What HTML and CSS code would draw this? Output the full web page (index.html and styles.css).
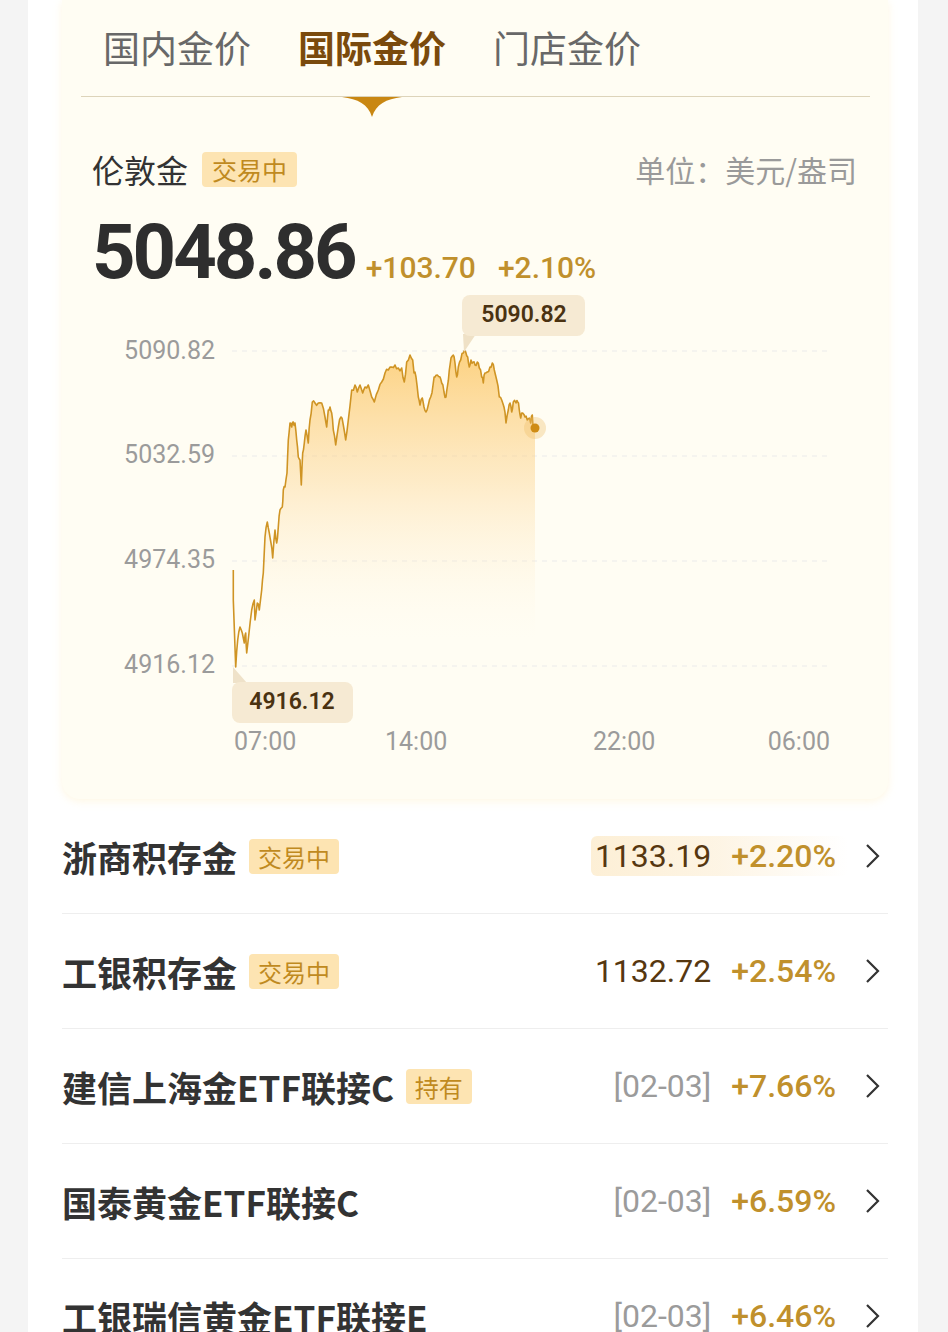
FILE: index.html
```html
<!DOCTYPE html>
<html lang="zh-CN">
<head>
    <meta charset="UTF-8">
    <meta name="viewport" content="width=device-width, initial-scale=1.0">
    <title>国际金价</title>
    <link rel="stylesheet" href="styles.css">
</head>
<body>
    <div class="panel">
        <section class="quote-card">
            <nav class="tabs">
                <span class="tab">国内金价</span>
                <span class="tab active">国际金价
                    <svg class="tab-arrow" width="60" height="20" viewBox="0 0 60 20">
                        <path d="M0 0 H60 C44 2 34 7 30 20 C26 7 16 2 0 0 Z" fill="#c98712"/>
                    </svg>
                </span>
                <span class="tab">门店金价</span>
            </nav>

            <div class="quote-head">
                <div class="quote-name">伦敦金 <span class="badge">交易中</span></div>
                <div class="unit">单位：美元/盎司</div>
            </div>

            <div class="quote-price">
                <span class="price">5048.86</span>
                <span class="chg">+103.70</span>
                <span class="chg">+2.10%</span>
            </div>

            <!-- viewBox uses page coordinates so points read straight off the axis -->
            <svg class="chart" width="766" height="480" viewBox="92 290 766 480">
                <defs>
                    <linearGradient id="goldFill" gradientUnits="userSpaceOnUse" x1="0" y1="350" x2="0" y2="640">
                        <stop offset="0" stop-color="#fbc053" stop-opacity="0.72"/>
                        <stop offset="0.45" stop-color="#fcd28a" stop-opacity="0.42"/>
                        <stop offset="1" stop-color="#fff6e2" stop-opacity="0"/>
                    </linearGradient>
                </defs>

                <line class="grid" x1="232" y1="351" x2="830" y2="351"/>
                <line class="grid" x1="232" y1="456" x2="830" y2="456"/>
                <line class="grid" x1="232" y1="561" x2="830" y2="561"/>
                <line class="grid" x1="232" y1="666" x2="830" y2="666"/>

                <text class="axis-label" x="215" y="359" text-anchor="end">5090.82</text>
                <text class="axis-label" x="215" y="463" text-anchor="end">5032.59</text>
                <text class="axis-label" x="215" y="568" text-anchor="end">4974.35</text>
                <text class="axis-label" x="215" y="673" text-anchor="end">4916.12</text>

                <path id="area" fill="url(#goldFill)" d=""/>
                <path id="line" class="price-line" d=""/>

                <circle cx="535" cy="428" r="11" fill="#efbd68" opacity="0.35"/>
                <circle cx="535" cy="428" r="4.5" fill="#cf8c14"/>

                <path d="M463 334 L476 334 L464 352 Z" fill="#efe1c6"/>
                <rect x="462" y="295" width="123" height="41" rx="8" fill="#f6ead3"/>
                <text class="tip-text" x="524" y="322" text-anchor="middle">5090.82</text>

                <path d="M233 667 L233 683 L247 683 Z" fill="#efe2c9"/>
                <rect x="232" y="682" width="121" height="41" rx="8" fill="#f6ead3"/>
                <text class="tip-text" x="292" y="709" text-anchor="middle">4916.12</text>

                <text class="axis-label" x="234" y="750">07:00</text>
                <text class="axis-label" x="385" y="750">14:00</text>
                <text class="axis-label" x="593" y="750">22:00</text>
                <text class="axis-label" x="830" y="750" text-anchor="end">06:00</text>
            </svg>
        </section>

        <ul class="fund-list">
            <li class="fund-row">
                <span class="fund-name">浙商积存金</span>
                <span class="badge">交易中</span>
                <span class="fund-nums flash">
                    <span class="fund-value">1133.19</span>
                    <span class="fund-chg">+2.20%</span>
                </span>
                <svg class="chevron" width="16" height="26" viewBox="0 0 16 26"><polyline points="3,2 14,13 3,24"/></svg>
            </li>
            <li class="fund-row">
                <span class="fund-name">工银积存金</span>
                <span class="badge">交易中</span>
                <span class="fund-nums">
                    <span class="fund-value">1132.72</span>
                    <span class="fund-chg">+2.54%</span>
                </span>
                <svg class="chevron" width="16" height="26" viewBox="0 0 16 26"><polyline points="3,2 14,13 3,24"/></svg>
            </li>
            <li class="fund-row">
                <span class="fund-name">建信上海金ETF联接C</span>
                <span class="badge">持有</span>
                <span class="fund-nums">
                    <span class="fund-date">[02-03]</span>
                    <span class="fund-chg">+7.66%</span>
                </span>
                <svg class="chevron" width="16" height="26" viewBox="0 0 16 26"><polyline points="3,2 14,13 3,24"/></svg>
            </li>
            <li class="fund-row">
                <span class="fund-name">国泰黄金ETF联接C</span>
                <span class="fund-nums">
                    <span class="fund-date">[02-03]</span>
                    <span class="fund-chg">+6.59%</span>
                </span>
                <svg class="chevron" width="16" height="26" viewBox="0 0 16 26"><polyline points="3,2 14,13 3,24"/></svg>
            </li>
            <li class="fund-row">
                <span class="fund-name">工银瑞信黄金ETF联接E</span>
                <span class="fund-nums">
                    <span class="fund-date">[02-03]</span>
                    <span class="fund-chg">+6.46%</span>
                </span>
                <svg class="chevron" width="16" height="26" viewBox="0 0 16 26"><polyline points="3,2 14,13 3,24"/></svg>
            </li>
        </ul>
    </div>

    <script>
        // intraday points, x = time slot, y = price mapped to the chart
        var points = [
            [233.3,570],[233.3,600],[235.7,667],[237.7,640],[240,627],[242.3,633],[244.3,643],[245.7,633],
            [246.7,653],[249,633],[251.7,610],[254.3,600],[255,620],[257.3,603],[259.3,610],[261.7,590],
            [263.3,573],[265,537],[267.3,522],[269.3,533],[271,543],[272.7,558],[275,530],[276.7,543],
            [278.3,527],[280,510],[282.3,507],[283.3,490],[285,487],[287,473],[288.3,440],[290,423],
            [291.7,427],[293.3,422],[295,423],[296.7,440],[298.3,457],[300,460],[301.3,485],[302.7,453],
            [304.3,443],[306,430],[308.3,443],[310,420],[312.3,402],[315,403],[318.3,403],[321.7,403],
            [325,417],[326.7,427],[328.3,410],[330,407],[331.7,413],[333.3,430],[335.7,445],[338.3,427],
            [341,417],[343.3,425],[345.7,440],[348.3,420],[351.7,390],[355,385],[357.3,392],[360,385],
            [362.7,393],[365,387],[368.3,385],[371.7,397],[374.3,402],[378.3,390],[381.7,382],[385,373],
            [388.3,370],[391.7,367],[395,365],[398.3,368],[401.7,368],[404.3,382],[406.7,362],[410,355],
            [412.7,360],[414,373],[416,377],[418.3,397],[420,405],[422.3,398],[424,407],[426,412],
            [428.3,405],[430.7,397],[433.3,383],[435,377],[437.3,375],[440,377],[441.7,383],[444,392],
            [446,397],[447.3,387],[449.3,370],[451,358],[453.3,355],[455,363],[456.7,377],[458.3,367],
            [460.7,360],[463.3,353],[465.7,352],[467.7,357],[469.3,367],[471,360],[473.3,362],[475,365],
            [477.3,362],[479.3,368],[481.7,377],[483.3,383],[485,373],[487.3,372],[490,367],[492.3,363],
            [494.3,370],[496.7,380],[499.3,397],[501.7,400],[504,407],[506,423],[508.3,410],[510,403],
            [511.7,412],[513.3,402],[516,403],[517.7,402],[519.3,410],[520.7,418],[522.7,413],[525,417],
            [527.3,420],[529.3,418],[530.7,423],[532.3,415],[533.3,428],[535,428]
        ];

        // add a little tick noise between the traced points
        var seed = 7;
        function rand() {
            seed = (seed * 9301 + 49297) % 233280;
            return seed / 233280;
        }

        var d = "M" + points[0][0] + " " + points[0][1];
        for (var i = 1; i < points.length; i++) {
            var a = points[i - 1], b = points[i];
            var mx = (a[0] + b[0]) / 2;
            var my = (a[1] + b[1]) / 2 + (rand() - 0.5) * 6;
            if (i > 2) d += " L" + mx.toFixed(1) + " " + my.toFixed(1);
            d += " L" + b[0] + " " + b[1];
        }

        document.getElementById("line").setAttribute("d", d);
        document.getElementById("area").setAttribute("d", d + " L535 660 L233.3 660 Z");
    </script>
</body>
</html>
```

FILE: styles.css
```css
body {
    margin: 0;
    background-color: #f4f4f4;
    font-family: "Noto Sans CJK SC", sans-serif;
    color: #333;
}

.panel {
    margin: 0 30px 0 28px;
    padding: 0 30px 0 34px;
    background-color: #fff;
    min-height: 1400px;
}

/* top quote card */

.quote-card {
    background-color: #fffdf3;
    border-radius: 0 0 18px 18px;
    padding-bottom: 29px;
    box-shadow: 0 2px 8px rgba(255, 244, 214, 0.7);
}

.tabs {
    display: flex;
    gap: 47px;
    margin: 0 18px 0 19px;
    padding: 25px 0 27px 22px;
    border-bottom: 1px solid #ddd4ba;
}

.tab {
    position: relative;
    font-size: 37px;
    line-height: 44px;
    color: #686868;
}

.tab.active {
    color: #7a4a0c;
    font-weight: 700;
}

.tab-arrow {
    position: absolute;
    top: 72px;
    left: 50%;
    margin-left: -30px;
}

.quote-head {
    display: flex;
    justify-content: space-between;
    align-items: center;
    margin-top: 52px;
    padding: 0 31px 0 30px;
}

.quote-name {
    display: flex;
    align-items: center;
    gap: 14px;
    font-size: 32px;
    line-height: 40px;
    color: #333;
}

.badge {
    display: inline-block;
    padding: 0 9px;
    height: 35px;
    line-height: 35px;
    font-size: 24px;
    font-weight: 400;
    color: #c08a1f;
    background-color: #fde4b2;
    border-radius: 4px;
}

.quote-name .badge {
    padding: 0 10px;
    font-size: 25px;
}

.unit {
    font-size: 30px;
    line-height: 40px;
    color: #9a9a9a;
}

.quote-price {
    display: flex;
    align-items: baseline;
    margin-top: 25px;
    padding-left: 30px;
    font-family: Roboto, sans-serif;
}

.price {
    font-size: 76px;
    line-height: 76px;
    font-weight: 700;
    letter-spacing: -3px;
    color: #2e2e2e;
    margin-right: 11px;
}

.chg {
    font-size: 30px;
    font-weight: 500;
    color: #c0902c;
    margin-right: 22px;
}

.chart {
    display: block;
    margin-left: 30px;
}

.grid {
    stroke: #ebebeb;
    stroke-width: 1;
    stroke-dasharray: 5 5;
}

.axis-label {
    font-family: Roboto, sans-serif;
    font-size: 25px;
    fill: #9b9b9b;
}

.tip-text {
    font-family: Roboto, sans-serif;
    font-size: 23px;
    font-weight: 600;
    fill: #4a3211;
}

.price-line {
    fill: none;
    stroke: #cf9424;
    stroke-width: 1.6;
    stroke-linejoin: round;
}

/* fund list */

.fund-list {
    list-style: none;
    margin: 0;
    padding: 0;
}

.fund-row {
    display: flex;
    align-items: center;
    height: 114px;
    border-bottom: 1px solid #eeeeee;
}

.fund-name {
    font-size: 35px;
    font-weight: 700;
    color: #333;
    margin-right: 12px;
}

.fund-nums {
    display: flex;
    align-items: center;
    gap: 20px;
    margin-left: auto;
    padding: 3px 12px 3px 4px;
    font-family: Roboto, sans-serif;
    font-size: 32px;
    line-height: 34px;
}

.fund-nums.flash {
    border-radius: 6px;
    background: linear-gradient(90deg, rgba(252, 234, 200, 0.75) 0%, rgba(253, 242, 222, 0.8) 50%, rgba(255, 250, 240, 0) 100%);
}

.fund-value {
    color: #563710;
}

.fund-date {
    color: #9b9b9b;
}

.fund-chg {
    font-weight: 500;
    color: #c0902c;
}

.chevron {
    margin: 0 8px 0 16px;
}

.chevron polyline {
    fill: none;
    stroke: #333;
    stroke-width: 2.2;
}
```
